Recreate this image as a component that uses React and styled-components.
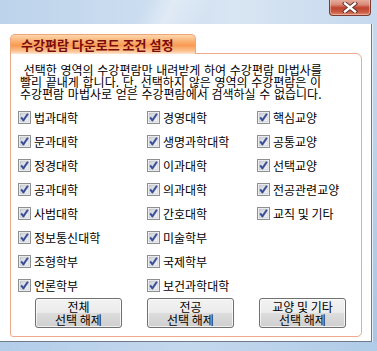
import styled, { createGlobalStyle } from 'styled-components'

const GlobalStyle = createGlobalStyle`
  html, body {
    margin: 0;
    padding: 0;
    overflow: hidden;
    background: #ffffff;
  }
  body {
    font-family: "Noto Sans CJK KR", "Noto Sans", sans-serif;
  }
`

const Window = styled.div`
  width: 377px;
  height: 351px;
  display: grid;
  grid-template-rows: 24px 318px 9px;
  background: #b7cfe8;
`

const TitleBar = styled.div`
  display: flex;
  justify-content: flex-end;
  align-items: flex-start;
  padding-right: 6px;
  background:
    linear-gradient(115deg, transparent 0%, transparent 38%, rgba(255, 255, 255, 0.35) 45%, transparent 55%, transparent 100%),
    linear-gradient(to right, #bcd3eb 0%, #cddef0 40%, #d8e5f3 62%, #c6d9ee 100%);
`

const CloseButton = styled.div`
  width: 42px;
  height: 17px;
  margin-top: -1px;
  box-sizing: border-box;
  border: 1px solid #7c3a31;
  border-top: none;
  border-radius: 0 0 4px 4px;
  background: linear-gradient(to bottom, #e9b2a4 0%, #d98a78 35%, #c0432f 55%, #c85a42 80%, #dd8b70 100%);
  box-shadow: inset 0 0 0 1px rgba(255, 220, 210, 0.45);
  display: flex;
  align-items: center;
  justify-content: center;
`

const Middle = styled.div`
  display: grid;
  grid-template-columns: 372px 5px;
`

const Client = styled.div`
  background: #ffffff;
  border-right: 1px solid #6e7c8a;
  border-bottom: 1px solid #6e7c8a;
  padding: 10px 0 0 10px;
  box-sizing: border-box;
`

const SideFrame = styled.div`
  background: linear-gradient(to bottom, #c6daee, #a9c6e5);
  box-shadow: inset 1px 0 0 #e6eef7;
`

const BottomFrame = styled.div`
  background: linear-gradient(to right, #b3cde9, #c4d8ed 50%, #b0cbe7);
`

const Group = styled.div`
  width: 352px;
  display: flex;
  flex-direction: column;
`

const Tab = styled.div`
  align-self: flex-start;
  position: relative;
  z-index: 1;
  width: 186px;
  height: 20px;
  margin-bottom: -1px;
  box-sizing: border-box;
  border: 1px solid #efa577;
  border-bottom: none;
  border-radius: 5px 5px 0 0;
  background: linear-gradient(to bottom, #fdd7ae 0%, #fbb477 30%, #f99a52 55%, #fbc393 85%, #fde6d2 100%);
  padding-left: 10px;
  font-size: 13px;
  font-weight: bold;
  line-height: 19px;
  color: #7a0c0c;
  white-space: nowrap;
`

const Box = styled.div`
  height: 284px;
  box-sizing: border-box;
  border: 1px solid #efa98b;
  border-radius: 0 6px 5px 3px;
  padding: 10px 0 0 9px;
  display: flex;
  flex-direction: column;
`

const Description = styled.div`
  display: flex;
  flex-direction: column;
`

const DescLine = styled.span`
  display: block;
  height: 12px;
  font-size: 12px;
  line-height: 12px;
  word-spacing: 1px;
  color: #000000;
  white-space: pre;
`

const OptionGrid = styled.div`
  display: grid;
  grid-template-columns: 129px 110px 1fr;
  grid-auto-rows: 24px;
  margin-top: 5px;
  margin-left: -2px;
`

const Option = styled.label`
  display: flex;
  align-items: center;
  gap: 3px;
  font-size: 12px;
  color: #000000;
  white-space: nowrap;
  grid-column: ${({ col }) => col};
  grid-row: ${({ row }) => row};
`

const ButtonRow = styled.div`
  display: flex;
  gap: 25px;
  margin-top: 1px;
  padding-left: 15px;
`

const Button = styled.div`
  width: 87px;
  height: 30px;
  box-sizing: border-box;
  border: 1px solid #707070;
  border-radius: 3px;
  background: linear-gradient(to bottom, #f2f2f2 0%, #ebebeb 48%, #dddddd 50%, #cfcfcf 100%);
  box-shadow: inset 0 0 0 1px rgba(255, 255, 255, 0.7);
  display: flex;
  flex-direction: column;
  align-items: center;
  justify-content: center;
  color: #000000;
  white-space: nowrap;
`

const ButtonLine = styled.span`
  display: block;
  height: 13px;
  font-size: 12px;
  line-height: 13px;
`

const CheckIcon = () => (
  <svg width="13" height="13" viewBox="0 0 13 13">
    <rect x="0.5" y="0.5" width="12" height="12" fill="#ffffff" stroke="#8e8f8f" />
    <defs>
      <linearGradient id="cbfill" x1="0" y1="0" x2="1" y2="1">
        <stop offset="0" stopColor="#cbcfd5" />
        <stop offset="1" stopColor="#f6f6f6" />
      </linearGradient>
    </defs>
    <rect x="2" y="2" width="9" height="9" fill="url(#cbfill)" stroke="#b4b9bf" strokeWidth="0.6" />
    <path d="M3.2 6.4 L5.4 9.4 L9.9 2.8" fill="none" stroke="#3b4f99" strokeWidth="2" strokeLinejoin="round" />
  </svg>
)

const CloseGlyph = () => (
  <svg width="16" height="11" viewBox="0 0 16 11">
    <path d="M3 1.5 L13 9.5 M13 1.5 L3 9.5" stroke="#5a2a25" strokeWidth="4.2" strokeLinecap="square" />
    <path d="M3 1.5 L13 9.5 M13 1.5 L3 9.5" stroke="#ffffff" strokeWidth="2.4" strokeLinecap="square" />
  </svg>
)

const description = [
  ' 선택한 영역의 수강편람만 내려받게 하여 수강편람 마법사를',
  '빨리 끝내게 합니다. 단, 선택하지 않은 영역의 수강편람은 이',
  '수강편람 마법사로 얻은 수강편람에서 검색하실 수 없습니다.',
]

const options = [
  ['법과대학', '문과대학', '정경대학', '공과대학', '사범대학', '정보통신대학', '조형학부', '언론학부'],
  ['경영대학', '생명과학대학', '이과대학', '의과대학', '간호대학', '미술학부', '국제학부', '보건과학대학'],
  ['핵심교양', '공통교양', '선택교양', '전공관련교양', '교직 및 기타'],
]

const buttons = ['전체', '전공', '교양 및 기타']

export default function App() {
  return (
    <>
      <GlobalStyle />
      <Window>
        <TitleBar>
          <CloseButton>
            <CloseGlyph />
          </CloseButton>
        </TitleBar>
        <Middle>
          <Client>
            <Group>
              <Tab>수강편람 다운로드 조건 설정</Tab>
              <Box>
                <Description>
                  {description.map(line => <DescLine key={line}>{line}</DescLine>)}
                </Description>
                <OptionGrid>
                  {options.map((column, c) =>
                    column.map((name, r) => (
                      <Option key={name} col={c + 1} row={r + 1}>
                        <CheckIcon />
                        {name}
                      </Option>
                    ))
                  )}
                </OptionGrid>
                <ButtonRow>
                  {buttons.map(label => (
                    <Button key={label}>
                      <ButtonLine>{label}</ButtonLine>
                      <ButtonLine>선택 해제</ButtonLine>
                    </Button>
                  ))}
                </ButtonRow>
              </Box>
            </Group>
          </Client>
          <SideFrame />
        </Middle>
        <BottomFrame />
      </Window>
    </>
  )
}
